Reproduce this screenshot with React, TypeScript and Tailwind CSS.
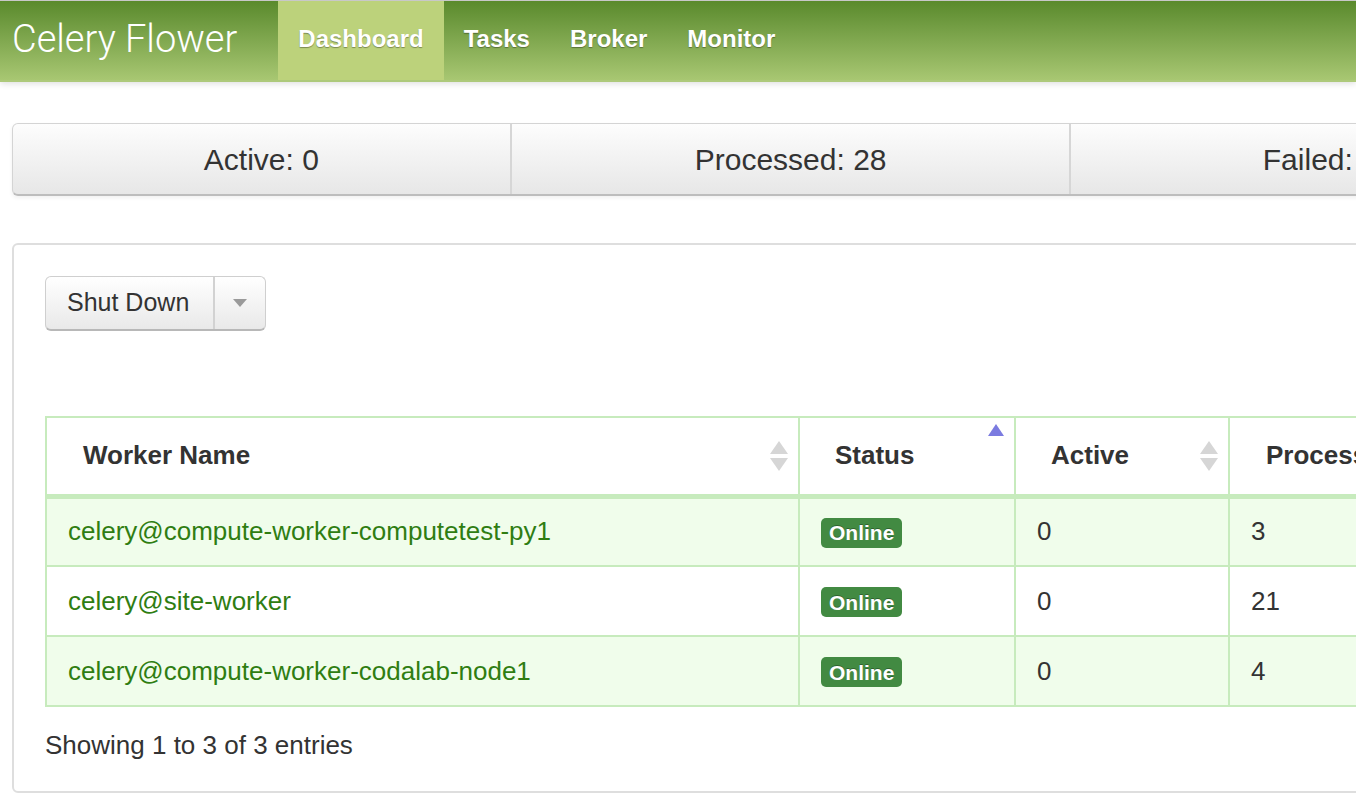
import React from "react"

const workers = [
  { name: "celery@compute-worker-computetest-py1", active: 0, processed: 3 },
  { name: "celery@site-worker", active: 0, processed: 21 },
  { name: "celery@compute-worker-codalab-node1", active: 0, processed: 4 },
]

function SortBoth() {
  return (
    <svg width="18" height="30" viewBox="0 0 18 30" className="shrink-0">
      <path d="M0 13 L9 0 L18 13 Z" fill="#d6d6d6" />
      <path d="M0 17 L18 17 L9 30 Z" fill="#d6d6d6" />
    </svg>
  )
}

function SortAsc() {
  return (
    <svg width="16" height="12" viewBox="0 0 16 12" className="shrink-0">
      <path d="M0 12 L8 0 L16 12 Z" fill="#7b7be0" />
    </svg>
  )
}

export default function App() {
  return (
    <div className="w-[1356px] h-[794px] overflow-hidden bg-white font-['Liberation_Sans',Arial,sans-serif] text-[#333]">
      {/* Navbar */}
      <div className="h-[82px] w-full flex items-stretch border-t border-[#c8c8c8] border-b-2 border-b-[#adc97a] bg-gradient-to-b from-[#5a8a2c] to-[#a8c772] shadow-[0_2px_6px_rgba(0,0,0,0.12)]">
        <div className="pl-[12px] pr-[41px] pb-[3px] flex items-center text-white text-[38px] font-light font-['Roboto','Liberation_Sans',sans-serif]">
          Celery Flower
        </div>
        <div className="flex items-stretch text-white text-[24px] font-bold [text-shadow:0_1px_1px_rgba(0,0,0,0.35)]">
          <div className="px-[20px] pb-[3px] flex items-center bg-[#bcd27b]">Dashboard</div>
          <div className="px-[20px] pb-[3px] flex items-center">Tasks</div>
          <div className="px-[20px] pb-[3px] flex items-center">Broker</div>
          <div className="px-[20px] pb-[3px] flex items-center">Monitor</div>
        </div>
      </div>

      <div className="w-[2200px] pl-[12px]">
        {/* Stats */}
        <div className="mt-[41px] h-[73px] w-[2000px] flex rounded-[6px] border border-[#d4d4d4] border-b-2 border-b-[#bdbdbd] bg-gradient-to-b from-[#fdfdfd] to-[#e7e7e7] shadow-[0_2px_4px_rgba(0,0,0,0.06)] text-[30px]">
          <div className="w-[499px] flex items-center justify-center border-r-2 border-[#d6d6d6]">Active: 0</div>
          <div className="w-[560px] flex items-center justify-center border-r-2 border-[#d6d6d6]">Processed: 28</div>
          <div className="w-[500px] flex items-center justify-center border-r-2 border-[#d6d6d6]">Failed: 0</div>
          <div className="w-[440px] flex items-center justify-center">Succeeded: 28</div>
        </div>

        {/* Panel */}
        <div className="mt-[47px] h-[550px] w-[2000px] rounded-[6px] border-2 border-[#dedede] pl-[31px] pt-[31px]">
          <div className="inline-flex h-[55px] rounded-[6px] border border-[#cfcfcf] border-b-2 border-b-[#b8b8b8] bg-gradient-to-b from-white to-[#e9e9e9] text-[25px] text-[#333]">
            <div className="pl-[21px] pr-[24px] flex items-center border-r-2 border-[#d2d2d2]">Shut Down</div>
            <div className="w-[50px] flex items-center justify-center">
              <svg width="14" height="8" viewBox="0 0 14 8">
                <path d="M0 0 L14 0 L7 8 Z" fill="#9a9a9a" />
              </svg>
            </div>
          </div>

          <table className="mt-[85px] table-fixed border-collapse w-[1900px] text-[26px]">
            <colgroup>
              <col className="w-[753px]" />
              <col className="w-[216px]" />
              <col className="w-[214px]" />
              <col />
            </colgroup>
            <thead>
              <tr className="h-[79px]">
                <th className="border-2 border-b-[5px] border-[#c7ebbd] pl-[36px] pr-[10px] text-left font-bold">
                  <div className="flex items-center justify-between">
                    <span>Worker Name</span>
                    <SortBoth />
                  </div>
                </th>
                <th className="border-2 border-b-[5px] border-[#c7ebbd] pl-[35px] pr-[10px] text-left font-bold">
                  <div className="flex items-center justify-between">
                    <span>Status</span>
                    <span className="self-start -mt-[12px]">
                      <SortAsc />
                    </span>
                  </div>
                </th>
                <th className="border-2 border-b-[5px] border-[#c7ebbd] pl-[35px] pr-[10px] text-left font-bold">
                  <div className="flex items-center justify-between">
                    <span>Active</span>
                    <SortBoth />
                  </div>
                </th>
                <th className="border-2 border-b-[5px] border-[#c7ebbd] pl-[36px] text-left font-bold">Processed</th>
              </tr>
            </thead>
            <tbody>
              {workers.map((w, i) => (
                <tr key={w.name} className={`h-[70px] ${i % 2 === 0 ? "bg-[#f0fdeb]" : "bg-white"}`}>
                  <td className="border-2 border-[#c7ebbd] pl-[21px] text-[#2f7d12] whitespace-nowrap">{w.name}</td>
                  <td className="border-2 border-[#c7ebbd] pl-[21px]">
                    <span className="inline-flex items-center h-[30px] px-[8px] rounded-[5px] bg-[#428a42] text-white text-[21px] font-bold [text-shadow:0_-1px_0_rgba(0,0,0,0.3)]">
                      Online
                    </span>
                  </td>
                  <td className="border-2 border-[#c7ebbd] pl-[21px]">{w.active}</td>
                  <td className="border-2 border-[#c7ebbd] pl-[21px]">{w.processed}</td>
                </tr>
              ))}
            </tbody>
          </table>

          <div className="mt-[19px] text-[26px]">Showing 1 to 3 of 3 entries</div>
        </div>
      </div>
    </div>
  )
}
